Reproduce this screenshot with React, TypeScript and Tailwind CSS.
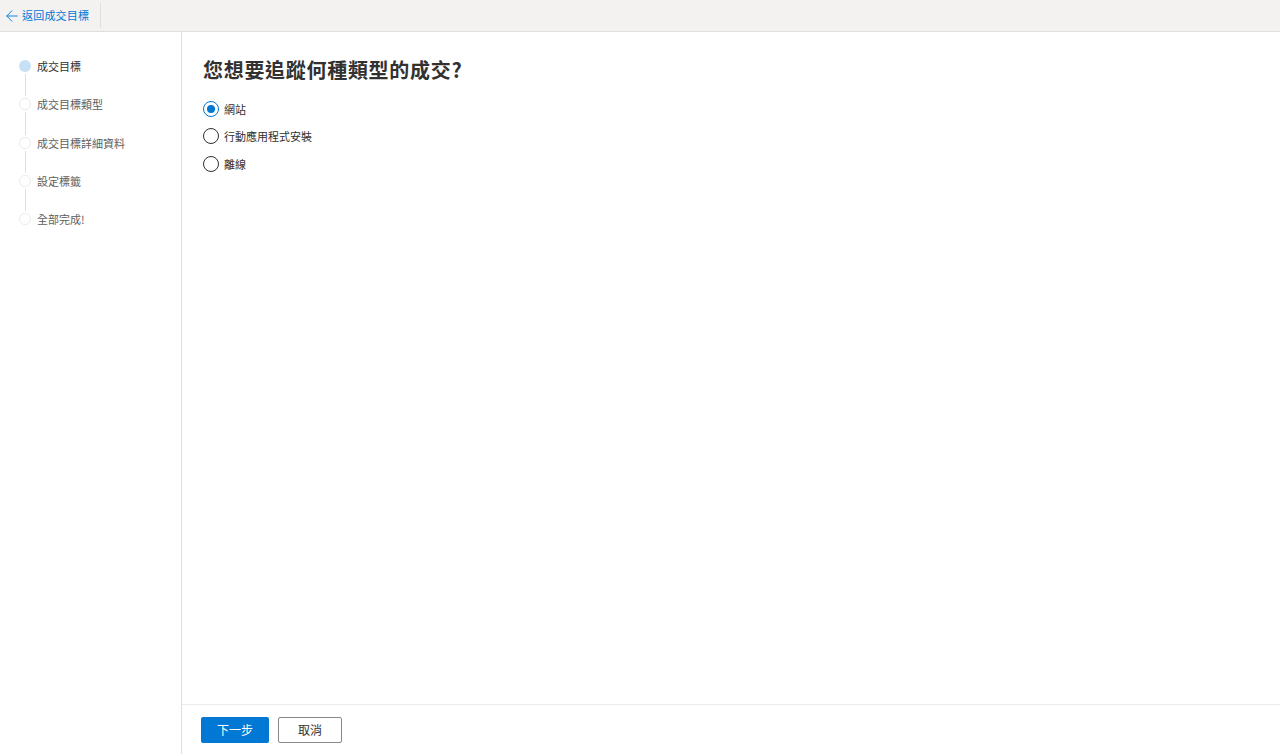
import { ArrowLeft } from "lucide-react";

const steps = ["成交目標", "成交目標類型", "成交目標詳細資料", "設定標籤", "全部完成!"];
const options = ["網站", "行動應用程式安裝", "離線"];

const font = "font-['Noto_Sans_CJK_TC','Noto_Sans',sans-serif]";

function Radio({ checked, label }: { checked: boolean; label: string }) {
  return (
    <div className="flex h-[27.5px] items-center">
      <span
        className={`flex h-4 w-4 items-center justify-center rounded-full border ${
          checked ? "border-[#0078d4]" : "border-[#323130]"
        }`}
      >
        {checked && <span className="h-2 w-2 rounded-full bg-[#0078d4]" />}
      </span>
      <span className="ml-[5px] text-[11px] text-[#323130]">{label}</span>
    </div>
  );
}

export default function App() {
  return (
    <div className={`flex h-[754px] w-[1280px] flex-col overflow-hidden bg-white ${font}`}>
      <header className="flex h-8 items-center border-b border-[#e1dfdd] bg-[#f3f2f1]">
        <a className="flex items-center pl-[3px] pr-[11px] text-[11px] tracking-[0.2px] text-[#0078d4]">
          <ArrowLeft size={18} strokeWidth={1.2} />
          <span className="ml-[1px]">返回成交目標</span>
        </a>
        <div className="h-[25px] w-px bg-[#e1dfdd]" />
      </header>

      <div className="flex flex-1">
        <nav className="w-[182px] shrink-0 border-r border-[#e1dfdd] pl-[19px] pt-[28px]">
          {steps.map((step, i) => (
            <div key={step} className="flex h-[38.3px] items-start">
              <div className="flex h-full w-3 flex-col items-center">
                <span
                  className={`h-3 w-3 shrink-0 rounded-full ${
                    i === 0 ? "bg-[#c7e0f4]" : "border border-[#edebe9] bg-white"
                  }`}
                />
                {i < steps.length - 1 && <span className="my-[2px] w-px flex-1 bg-[#e1dfdd]" />}
              </div>
              <span
                className={`ml-[6px] text-[11px] leading-3 ${
                  i === 0 ? "text-[#323130]" : "text-[#605e5c]"
                }`}
              >
                {step}
              </span>
            </div>
          ))}
        </nav>

        <main className="flex flex-1 flex-col">
          <div className="flex-1 pl-[21px] pt-[24px]">
            <h1 className="text-[20px] font-semibold leading-7 tracking-[0.7px] text-[#323130]">
              您想要追蹤何種類型的成交?
            </h1>
            <div className="mt-[11px] flex flex-col">
              {options.map((o, i) => (
                <Radio key={o} checked={i === 0} label={o} />
              ))}
            </div>
          </div>
          <footer className="flex h-[50px] gap-[9px] border-t border-[#edebe9] pl-[19px] pt-3">
            <button className="h-[26px] w-[68px] rounded-[2px] bg-[#0078d4] text-[12px] text-white">
              下一步
            </button>
            <button className="h-[26px] w-[64px] rounded-[2px] border border-[#8a8886] bg-white text-[12px] text-[#323130]">
              取消
            </button>
          </footer>
        </main>
      </div>
    </div>
  );
}
